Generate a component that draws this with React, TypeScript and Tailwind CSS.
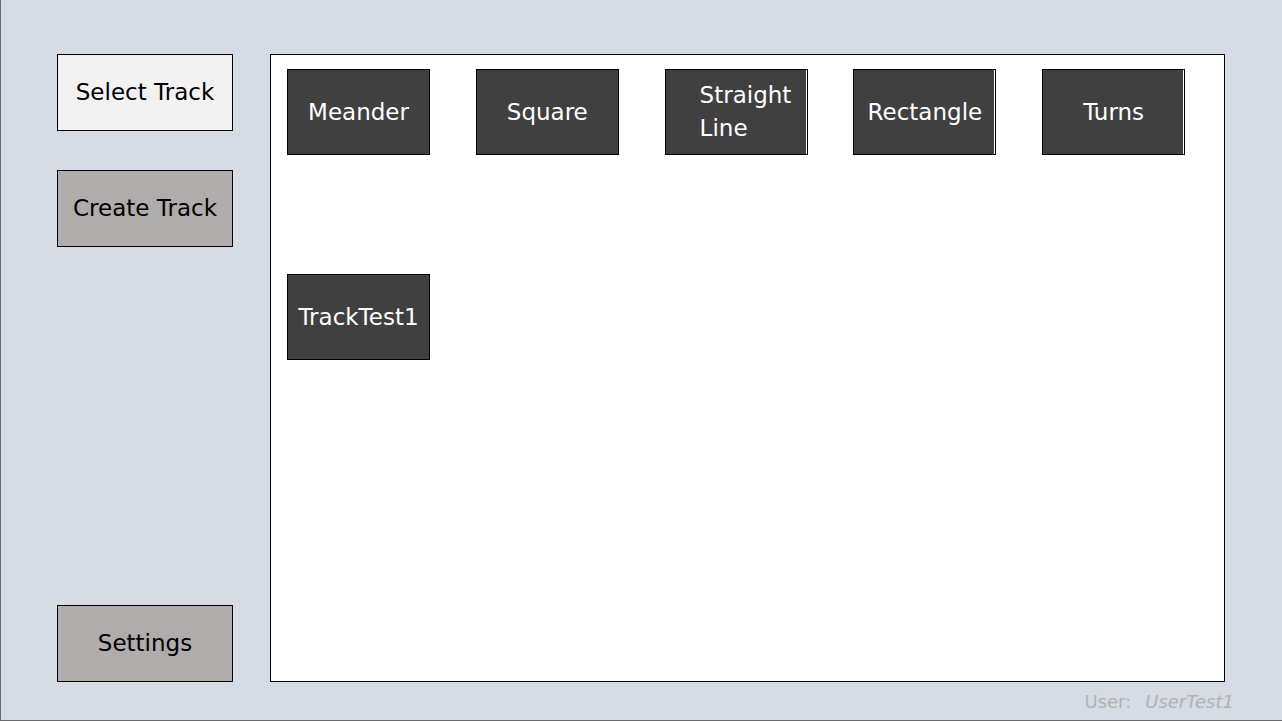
const font = { fontFamily: '"Comic Sans MS", "DejaVu Sans", sans-serif' };

function SideButton({ label, light }: { label: string; light?: boolean }) {
  return (
    <button
      className={`h-[77px] w-[176px] border border-black text-[23px] text-black ${
        light ? "bg-[#f2f2f2]" : "bg-[#b0acab]"
      }`}
    >
      {label}
    </button>
  );
}

function Tile({ children, edge, left }: { children: React.ReactNode; edge?: boolean; left?: boolean }) {
  return (
    <div
      className={`flex h-[86px] w-[143px] items-center border border-black bg-[#404040] text-[23px] leading-[33px] text-white ${
        left ? "justify-start pl-[34px] text-left" : "justify-center text-center"
      } ${edge ? "shadow-[inset_-1px_0_0_#ffffff]" : ""}`}
    >
      {children}
    </div>
  );
}

export default function App() {
  return (
    <div
      className="flex h-[721px] w-full flex-col border-b border-l border-[#6b6b6b] bg-[#d5dce6] pt-[54px]"
      style={font}
    >
      <div className="flex h-[628px] pl-[56px] pr-[57px]">
        {/* left menu */}
        <div className="flex flex-col gap-[39px]">
          <SideButton label="Select Track" light />
          <SideButton label="Create Track" />
          <div className="mt-auto">
            <SideButton label="Settings" />
          </div>
        </div>

        {/* track list */}
        <div className="ml-[37px] flex-1 border border-black bg-white pl-[16px] pt-[14px]">
          <div className="flex flex-wrap content-start gap-x-[45.8px] gap-y-[119px]">
            <Tile>Meander</Tile>
            <Tile>Square</Tile>
            <Tile edge left>
              <span>
                Straight
                <br />
                Line
              </span>
            </Tile>
            <Tile edge>Rectangle</Tile>
            <Tile edge>Turns</Tile>
            <Tile>TrackTest1</Tile>
          </div>
        </div>
      </div>

      {/* footer */}
      <div className="flex justify-end pr-[48px] pt-[6px] text-[18px] text-[#b3b3b3]">
        <span>User:</span>
        <span className="ml-[14px] italic">UserTest1</span>
      </div>
    </div>
  );
}
